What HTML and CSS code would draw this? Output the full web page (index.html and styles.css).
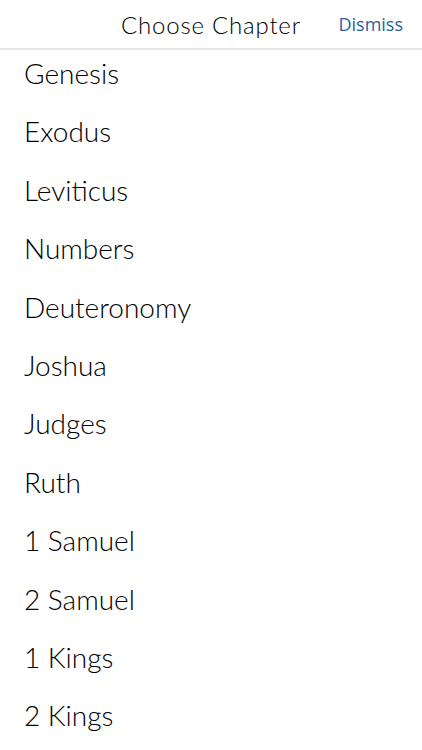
FILE: index.html
```html
<!DOCTYPE html>
<html lang="en">
<head>
    <meta charset="UTF-8">
    <meta name="viewport" content="width=device-width, initial-scale=1.0">
    <title>Choose Chapter</title>
    <link rel="stylesheet" href="styles.css">
</head>
<body>
    <header class="topbar">
        <h1 class="title">Choose Chapter</h1>
        <a class="dismiss" href="#">Dismiss</a>
    </header>

    <ul class="books">
        <li>Genesis</li>
        <li>Exodus</li>
        <li>Leviticus</li>
        <li>Numbers</li>
        <li>Deuteronomy</li>
        <li>Joshua</li>
        <li>Judges</li>
        <li>Ruth</li>
        <li>1 Samuel</li>
        <li>2 Samuel</li>
        <li>1 Kings</li>
        <li>2 Kings</li>
    </ul>
</body>
</html>
```

FILE: styles.css
```css
body {
    font-family: Lato, "Open Sans", sans-serif;
    background-color: #fff;
    margin: 0;
    color: #000;
    overflow: hidden;
}

.topbar {
    position: relative;
    height: 48px;
    border-bottom: 2px solid #e6e6e6;
    display: flex;
    align-items: center;
    justify-content: center;
}

.title {
    margin: 0;
    font-size: 24px;
    font-weight: 300;
    letter-spacing: 0.8px;
    color: #000;
}

.dismiss {
    position: absolute;
    right: 19px;
    top: 12px;
    font-family: "Open Sans", sans-serif;
    font-size: 18px;
    color: #2a5f9e;
    text-decoration: none;
}

.books {
    list-style: none;
    margin: 0;
    padding: 0;
}

.books li {
    height: 46px;
    line-height: 46px;
    padding: 0 0 12.4px 24px;
    font-size: 28px;
    font-weight: 300;
    color: #000;
}
```
